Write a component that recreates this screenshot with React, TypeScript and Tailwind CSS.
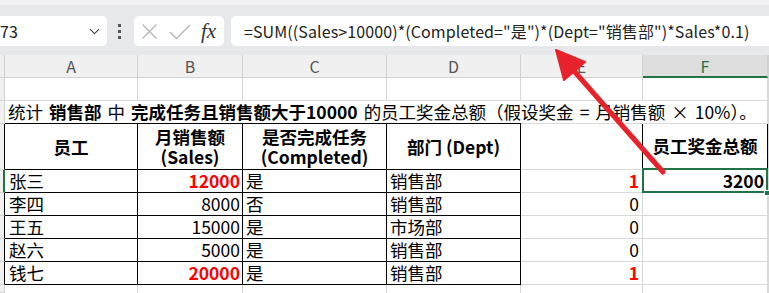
import { ChevronDown } from "lucide-react";

const FONT = { fontFamily: '"Noto Sans CJK SC", "Noto Sans", sans-serif' };

const grid = "border-[#d9d9d9]";

const staff = [
  { name: "张三", sales: "12000", hit: true, done: "是", dept: "销售部", flag: "1" },
  { name: "李四", sales: "8000", hit: false, done: "否", dept: "销售部", flag: "0" },
  { name: "王五", sales: "15000", hit: false, done: "是", dept: "市场部", flag: "0" },
  { name: "赵六", sales: "5000", hit: false, done: "是", dept: "销售部", flag: "0" },
  { name: "钱七", sales: "20000", hit: true, done: "是", dept: "销售部", flag: "1" },
];

function ColHead({ label, active }: { label: string; active?: boolean }) {
  return (
    <div
      className={
        active
          ? "flex items-center justify-center border-r border-b-2 border-r-[#d1d1d1] border-b-[#217346] bg-[#dedede] text-[16px] text-[#217346]"
          : "flex items-center justify-center border-r border-b border-[#d1d1d1] bg-[#f0f0f0] text-[16px] text-[#555]"
      }
    >
      {label}
    </div>
  );
}

function Toolbar() {
  return (
    <div className="relative h-[55px] bg-[#e6e8eb]">
      <div className="h-[5px] bg-[#f2f2f2]" />
      <div className="flex items-center pt-[11px]">
        <div className="ml-[-8px] flex h-[30px] w-[115px] items-center justify-between rounded-[5px] bg-white pl-2 pr-[4px] text-[16px] text-[#222]">
          <span>73</span>
          <ChevronDown size={17} strokeWidth={1.6} className="text-[#444]" />
        </div>
        <div className="ml-[11px] flex w-[4px] flex-col gap-[3px]">
          <span className="h-[3px] w-[3px] bg-[#555]" />
          <span className="h-[3px] w-[3px] bg-[#555]" />
          <span className="h-[3px] w-[3px] bg-[#555]" />
        </div>
        <div className="ml-[12px] flex h-[30px] w-[90px] items-center rounded-[5px] bg-white pl-[7px]">
          <svg width="17" height="17" viewBox="0 0 17 17" className="text-[#b5b5b5]">
            <path d="M1.5 1.5 L15.5 15.5 M15.5 1.5 L1.5 15.5" stroke="currentColor" strokeWidth="1.3" fill="none" />
          </svg>
          <svg width="22" height="17" viewBox="0 0 22 17" className="ml-[11px] text-[#b5b5b5]">
            <path d="M1 9 L7.5 15.5 L21 2" stroke="currentColor" strokeWidth="1.3" fill="none" />
          </svg>
          <span
            className="ml-[10px] text-[21px] italic leading-none text-[#333]"
            style={{ fontFamily: '"Liberation Serif", serif' }}
          >
            fx
          </span>
        </div>
        <div className="ml-[7px] mr-[-10px] flex h-[30px] flex-1 items-center rounded-[5px] bg-white pl-[13px] text-[16px] tracking-[0.1px] text-[#222] whitespace-nowrap">
          =SUM((Sales&gt;10000)*(Completed="是")*(Dept="销售部")*Sales*0.1)
        </div>
      </div>
    </div>
  );
}

function Sheet() {
  const rowHead = "border-r border-b border-[#d1d1d1] bg-[#f0f0f0]";
  const rowHeadTable = "border-r border-b border-b-[#d1d1d1] border-r-black bg-[#f0f0f0]";
  const tbl = "border-r border-b border-black";
  const head = `${tbl} flex flex-col items-center justify-center font-bold leading-[20px]`;

  return (
    <div className="grid h-[238px] grid-cols-[5px_133px_105px_144px_134px_122px_125px_1fr] grid-rows-[23px_23px_23px_46px_23px_23px_23px_23px_23px_1fr] text-[17.5px] text-black">
      {/* column letters */}
      <div className="border-r border-b border-[#d1d1d1] bg-[#f0f0f0]" />
      <ColHead label="A" />
      <ColHead label="B" />
      <ColHead label="C" />
      <ColHead label="D" />
      <ColHead label="E" />
      <ColHead label="F" active />
      <ColHead label="" />

      {/* row 1 */}
      <div className={rowHead} />
      {Array.from({ length: 7 }).map((_, i) => (
        <div key={i} className={`border-r border-b ${grid}`} />
      ))}

      {/* row 2: title overflowing across columns */}
      <div className={rowHead} />
      <div className="flex items-center whitespace-nowrap border-b border-black pl-[3px]">
        统计<b className="mx-[6px]">销售部</b>中<b className="ml-[6px]">完成任务且销售额大于10000</b>
        <span className="ml-[6px]">的员工奖金总额（假设奖金</span>
        <span className="mx-[6px]">=</span>
        <span>月销售额</span>
        <span className="mx-[6px]">×</span>
        <span>10%）。</span>
      </div>
      <div className="border-b border-black" />
      <div className="border-b border-black" />
      <div className="border-b border-black" />
      <div className={`border-b ${grid}`} />
      <div className={`border-r border-b ${grid}`} />
      <div className={`border-r border-b ${grid}`} />

      {/* table header */}
      <div className={rowHeadTable} />
      <div className={head}>员工</div>
      <div className={head}>
        <span>月销售额</span>
        <span>(Sales)</span>
      </div>
      <div className={head}>
        <span>是否完成任务</span>
        <span>(Completed)</span>
      </div>
      <div className={head}>部门 (Dept)</div>
      <div className="border-r border-b border-r-black border-b-[#d9d9d9]" />
      <div className="flex items-center justify-center border-r border-b border-r-black border-b-[#d9d9d9] font-bold">
        员工奖金总额
      </div>
      <div className={`border-r border-b ${grid}`} />

      {/* data rows */}
      {staff.map((p, i) => (
        <div key={p.name} className="contents">
          <div
            className={
              i === 0
                ? "border-r-2 border-b border-b-[#d1d1d1] border-r-[#217346] bg-[#f0f0f0]"
                : rowHeadTable
            }
          />
          <div className={`${tbl} flex items-center pl-[4px]`}>{p.name}</div>
          <div
            className={`${tbl} flex items-center justify-end pr-[2px] ${
              p.hit ? "font-bold text-[#ff0000]" : ""
            }`}
          >
            {p.sales}
          </div>
          <div className={`${tbl} flex items-center pl-[3px]`}>{p.done}</div>
          <div className={`${tbl} flex items-center pl-[3px]`}>{p.dept}</div>
          <div
            className={`flex items-center justify-end border-r border-b ${grid} pr-[3px] ${
              p.flag === "1" ? "font-bold text-[#ff0000]" : ""
            }`}
          >
            {p.flag}
          </div>
          {i === 0 ? (
            <div className={`relative flex items-center justify-end border-r border-b ${grid} pr-[3px] font-bold`}>
              3200
              <div className="pointer-events-none absolute -top-[2px] -left-[1px] -right-[1px] -bottom-[1px] border-2 border-[#217346]" />
              <div className="absolute -right-[3px] -bottom-[4px] h-[6px] w-[6px] border border-white bg-[#217346]" />
            </div>
          ) : (
            <div className={`border-r border-b ${grid}`} />
          )}
          <div className={`border-r border-b ${grid}`} />
        </div>
      ))}

      {/* partial last row */}
      <div className={rowHead} />
      {Array.from({ length: 7 }).map((_, i) => (
        <div key={i} className={`border-r ${grid}`} />
      ))}
    </div>
  );
}

function Arrow() {
  return (
    <svg className="pointer-events-none absolute left-0 top-0" width="769" height="293">
      <line x1="663" y1="172" x2="574" y2="71" stroke="#e8222b" strokeWidth="5" strokeLinecap="round" />
      <polygon points="556,50 585,62 564,80" fill="#e8222b" stroke="#e8222b" strokeWidth="2" strokeLinejoin="round" />
    </svg>
  );
}

export default function App() {
  return (
    <div className="relative h-[293px] w-[769px] overflow-hidden bg-white" style={FONT}>
      <Toolbar />
      <Sheet />
      <Arrow />
    </div>
  );
}
